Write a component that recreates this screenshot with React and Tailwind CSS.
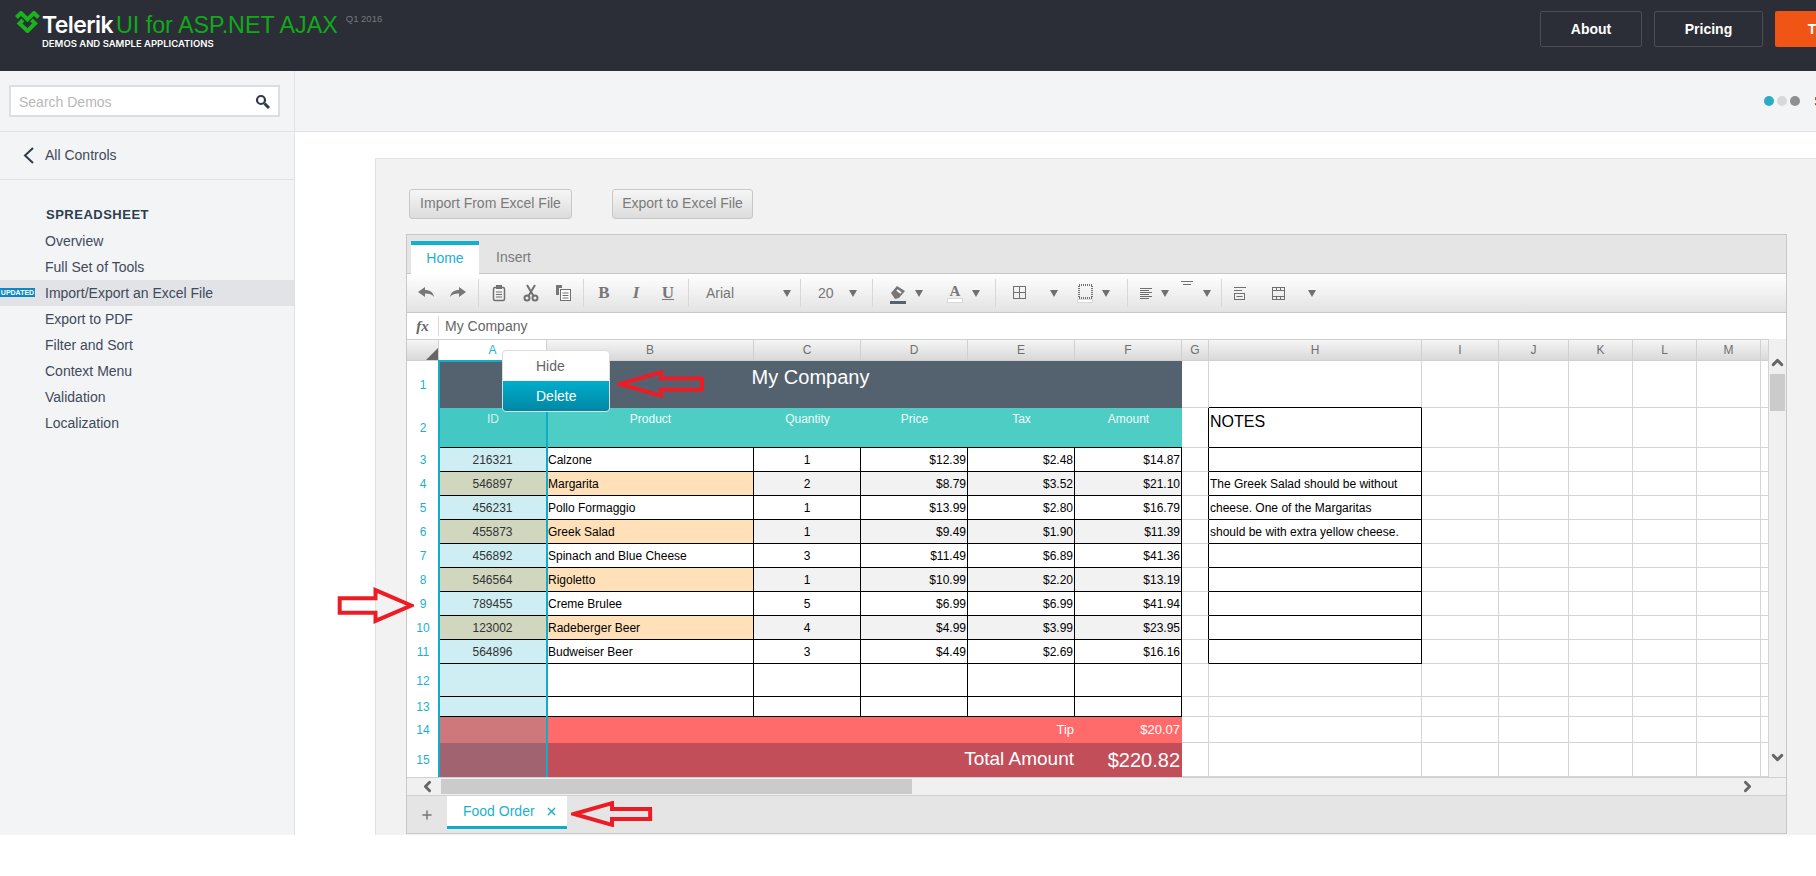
import { ChevronUp, ChevronDown, ChevronLeft, ChevronRight, Plus, X } from "lucide-react";

const SANS = "font-['Liberation_Sans',Arial,sans-serif]";

const navItems = ["Overview", "Full Set of Tools", "Import/Export an Excel File", "Export to PDF", "Filter and Sort", "Context Menu", "Validation", "Localization"];

const columns = ["A", "B", "C", "D", "E", "F", "G", "H", "I", "J", "K", "L", "M", ""];
const GRID_COLS = "grid-cols-[32px_108px_207px_107px_107px_107px_107px_27px_213px_77px_70px_64px_64px_64px_8px]";
const GRID_ROWS = "grid-rows-[47px_40px_24px_24px_24px_24px_24px_24px_24px_24px_24px_33px_20px_26px_34px]";

const orders = [
  ["216321", "Calzone", "1", "$12.39", "$2.48", "$14.87"],
  ["546897", "Margarita", "2", "$8.79", "$3.52", "$21.10"],
  ["456231", "Pollo Formaggio", "1", "$13.99", "$2.80", "$16.79"],
  ["455873", "Greek Salad", "1", "$9.49", "$1.90", "$11.39"],
  ["456892", "Spinach and Blue Cheese", "3", "$11.49", "$6.89", "$41.36"],
  ["546564", "Rigoletto", "1", "$10.99", "$2.20", "$13.19"],
  ["789455", "Creme Brulee", "5", "$6.99", "$6.99", "$41.94"],
  ["123002", "Radeberger Beer", "4", "$4.99", "$3.99", "$23.95"],
  ["564896", "Budweiser Beer", "3", "$4.49", "$2.69", "$16.16"],
];

const notes = {
  4: "The Greek Salad should be without",
  5: "cheese. One of the Margaritas",
  6: "should be with extra yellow cheese.",
};

const GRAY = "border-r border-b border-[#d4d4d4]";
const BLACK = "border-r border-b border-black";

function RowNum({ n }) {
  return <div className="flex items-center justify-center text-[12px] text-[#1cb0cf] bg-white">{n}</div>;
}

// columns G to N of a row, the notes box sits in H
function TailCells({ row }) {
  const inBox = row >= 2 && row <= 11;
  return (
    <>
      <div className={inBox ? "border-r border-b border-r-black border-b-[#d4d4d4] bg-white" : `${GRAY} bg-white`} />
      <div className={`${inBox || row === 1 ? (row === 1 ? "border-r border-r-[#d4d4d4] border-b border-b-black" : BLACK) : GRAY} bg-white flex pl-[1px] whitespace-nowrap text-black ${row === 2 ? "items-start text-[16px] pt-[2px]" : "items-center text-[12px]"}`}>
        {row === 2 ? "NOTES" : notes[row]}
      </div>
      {[0, 1, 2, 3, 4, 5].map((i) => (
        <div key={i} className={`${GRAY} bg-white`} />
      ))}
    </>
  );
}

function OrderRow({ row, data }) {
  const even = row % 2 === 0;
  const rest = even ? "bg-[#f2f2f2]" : "bg-white";
  return (
    <>
      <RowNum n={row} />
      <div className={`${BLACK} ${even ? "bg-[#d1d6be]" : "bg-[#cfeef3]"} flex items-center justify-center text-[12px] text-[#333]`}>{data[0]}</div>
      <div className={`${BLACK} ${even ? "bg-[#ffe0b8]" : "bg-white"} flex items-center pl-[1px] text-[12px] text-black whitespace-nowrap`}>{data[1]}</div>
      <div className={`${BLACK} ${rest} flex items-center justify-center text-[12px] text-black`}>{data[2]}</div>
      {data.slice(3).map((v, i) => (
        <div key={i} className={`${BLACK} ${rest} flex items-center justify-end pr-[1px] text-[12px] text-black`}>{v}</div>
      ))}
      <TailCells row={row} />
    </>
  );
}

function EmptyRow({ row }) {
  return (
    <>
      <RowNum n={row} />
      <div className={`${BLACK} bg-[#cfeef3]`} />
      {[0, 1, 2, 3, 4].map((i) => (
        <div key={i} className={`${BLACK} bg-white`} />
      ))}
      <TailCells row={row} />
    </>
  );
}

function SheetGrid() {
  return (
    <div className={`relative grid h-[416px] ${GRID_COLS} ${GRID_ROWS}`}>
      {/* row 1 */}
      <RowNum n={1} />
      <div className="col-span-6 bg-[#54626f] flex items-start justify-center pt-[1px] text-[20px] text-white">My Company</div>
      <TailCells row={1} />
      {/* row 2 */}
      <RowNum n={2} />
      <div className="bg-[#43c8c3] border-b border-black pt-[2px] text-center text-[12px] text-[#d3f3f1]">ID</div>
      {["Product", "Quantity", "Price", "Tax", "Amount"].map((h) => (
        <div key={h} className="bg-[#4ecdc4] border-b border-black pt-[2px] text-center text-[12px] text-[#eefbfa]">{h}</div>
      ))}
      <TailCells row={2} />
      {orders.map((o, i) => (
        <OrderRow key={i} row={i + 3} data={o} />
      ))}
      <EmptyRow row={12} />
      <EmptyRow row={13} />
      {/* tip */}
      <RowNum n={14} />
      <div className="bg-[#cf787b]" />
      <div className="col-span-4 bg-[#ff6b6b] flex items-center justify-end pr-[1px] pb-[1px] text-[13px] text-white">Tip</div>
      <div className="bg-[#ff6b6b] flex items-center justify-end pr-[2px] pb-[1px] text-[13px] text-white">$20.07</div>
      <TailCells row={14} />
      {/* total */}
      <RowNum n={15} />
      <div className="bg-[#a0636f]" />
      <div className="col-span-4 bg-[#c24e5a] flex items-center justify-end pr-[1px] pb-[2px] text-[19px] text-white">Total Amount</div>
      <div className="bg-[#c24e5a] flex items-center justify-end pr-[2px] text-[20px] text-white">$220.82</div>
      <TailCells row={15} />

      {/* selected column A */}
      <div className="absolute left-[31px] top-[-1px] bottom-0 w-[110px] border-x-2 border-t-2 border-[#12acc9] pointer-events-none" />

      {/* context menu */}
      <div className="absolute left-[95px] top-[-11px] w-[108px] rounded-[4px] border border-[#dcdcdc] bg-white overflow-hidden text-[14px]">
        <div className="h-[30px] flex items-center pl-[33px] text-[#666]">Hide</div>
        <div className="h-[30px] flex items-center pl-[33px] text-white bg-gradient-to-b from-[#00aecb] to-[#0087a5]">Delete</div>
      </div>
    </div>
  );
}

function Sep() {
  return <div className="mx-[4px] h-[28px] w-px flex-none bg-[#d8d8d8]" />;
}

function Caret() {
  return (
    <svg width="8" height="7" viewBox="0 0 8 7" className="flex-none">
      <path d="M0 0h8L4 7z" fill="#6f6f6f" />
    </svg>
  );
}

function Icon({ children, size = 18 }) {
  return (
    <svg width={size} height={size} viewBox={`0 0 ${size} ${size}`} fill="none" stroke="#707070" strokeWidth="1" className="flex-none">
      {children}
    </svg>
  );
}

function Btn({ children }) {
  return <div className="w-[32px] h-full flex items-center justify-center flex-none">{children}</div>;
}

function Toolbar() {
  return (
    <div className="h-[39px] border-b border-[#c8c8c8] bg-gradient-to-b from-white to-[#e3e3e3] flex items-center pl-[3px] text-[#777]">
      <Btn>
        <Icon><path d="M1 8l7-5v3c5 0 8 2 9 7-2-3-5-3.500-9-3.500V13z" fill="#777" stroke="none" /></Icon>
      </Btn>
      <Btn>
        <Icon><path d="M17 8l-7-5v3c-5 0-8 2-9 7 2-3 5-3.500 9-3.500V13z" fill="#777" stroke="none" /></Icon>
      </Btn>
      <Sep />
      <Btn>
        <Icon>
          <rect x="3.500" y="3.500" width="11" height="13" rx="1.500" strokeWidth="1.500" />
          <rect x="6.500" y="1.500" width="5" height="3" fill="#777" />
          <path d="M6 8h6M6 10.500h6M6 13h6" />
        </Icon>
      </Btn>
      <Btn>
        <Icon>
          <circle cx="5" cy="14" r="2.500" strokeWidth="2" />
          <circle cx="13" cy="14" r="2.500" strokeWidth="2" />
          <path d="M6.500 12L13 1M11.500 12L5 1" strokeWidth="2" />
        </Icon>
      </Btn>
      <Btn>
        <Icon>
          <path d="M2 1h6v3H5v7H2z" fill="#777" stroke="none" />
          <rect x="6.500" y="5.500" width="10" height="11" fill="#fff" />
          <path d="M8.500 9h6M8.500 11.500h6M8.500 14h6" />
        </Icon>
      </Btn>
      <Sep />
      <Btn><span className="font-['Liberation_Serif',serif] font-bold text-[17px]">B</span></Btn>
      <Btn><span className="font-['Liberation_Serif',serif] font-bold italic text-[17px]">I</span></Btn>
      <Btn><span className="font-['Liberation_Serif',serif] font-bold underline text-[17px]">U</span></Btn>
      <Sep />
      <div className="w-[103px] h-full flex items-center flex-none pl-[13px] gap-[39px] text-[14px]">
        <span className="w-[38px]">Arial</span>
        <Caret />
      </div>
      <Sep />
      <div className="w-[63px] h-full flex items-center flex-none pl-[13px] gap-[15px] text-[14px]">
        <span className="w-[16px]">20</span>
        <Caret />
      </div>
      <Sep />
      <div className="w-[58px] h-full flex items-center flex-none pl-[13px] gap-[9px]">
        <div className="flex flex-col items-center pt-[2px]">
          <Icon size={16}><path d="M1 8l6-7 8 5-6 7-4 1z" fill="#777" stroke="none" /><path d="M7 5l4 3" stroke="#fff" strokeWidth="2" /></Icon>
          <div className="w-[16px] h-[3px] bg-[#54626f]" />
        </div>
        <Caret />
      </div>
      <div className="w-[56px] h-full flex items-center flex-none pl-[12px] gap-[9px]">
        <div className="flex flex-col items-center">
          <span className="font-['Liberation_Serif',serif] font-bold text-[15px] leading-[14px]">A</span>
          <div className="w-[16px] h-[5px] bg-white border border-[#d8d8d8]" />
        </div>
        <Caret />
      </div>
      <Sep />
      <div className="w-[68px] h-full flex items-center flex-none pl-[11px] gap-[21px]">
        <Icon>
          <rect x="2.500" y="2.500" width="12" height="12" />
          <path d="M8.500 2.500v12M2.500 8.500h12" />
        </Icon>
        <Caret />
      </div>
      <div className="w-[55px] h-full flex items-center flex-none pl-[9px] gap-[9px]">
        <div className="flex flex-col items-center">
          <Icon size={16}><rect x="2" y="2" width="13" height="13" strokeDasharray="1 1" strokeWidth="2" /></Icon>
          <div className="w-[16px] h-[4px] bg-white border border-[#d8d8d8]" />
        </div>
        <Caret />
      </div>
      <Sep />
      <div className="w-[45px] h-full flex items-center flex-none pl-[6px] gap-[7px]">
        <Icon size={16}><path d="M2 3.500h12M2 5.500h9M2 7.500h12M2 9.500h9M2 11.500h12M2 13.500h9" /></Icon>
        <Caret />
      </div>
      <div className="w-[40px] h-full flex items-center flex-none pl-[3px] gap-[9px]">
        <div className="h-[20px] -mt-[8px]">
          <Icon size={14}><path d="M1 2.500h12M3 5.500h8" /></Icon>
        </div>
        <Caret />
      </div>
      <Sep />
      <div className="w-[28px] h-full flex items-center justify-center flex-none">
        <Icon size={16}>
          <path d="M2 2.500h12M2 5.500h8" />
          <rect x="2.500" y="8.500" width="10" height="6" />
          <path d="M4.500 11.500h6" />
        </Icon>
      </div>
      <div className="w-[65px] h-full flex items-center flex-none pl-[16px] gap-[22px]">
        <Icon size={16}>
          <rect x="2.500" y="2.500" width="12" height="12" />
          <path d="M2.500 5.500h12M2.500 11.500h12M6.500 2.500v3M10.500 2.500v3M6.500 11.500v3M10.500 11.500v3" />
        </Icon>
        <Caret />
      </div>
    </div>
  );
}

// red annotation arrow, body outline only
function RedArrow({ className, flip, w, h }) {
  return (
    <svg width={w} height={h} viewBox="0 0 86 36" preserveAspectRatio="none" fill="none" className={`absolute pointer-events-none ${flip ? "-scale-x-100" : ""} ${className}`}>
      <path d="M3 18L43 3v8h40v14H43v8z" stroke="#ed1c24" strokeWidth="4" vectorEffect="non-scaling-stroke" />
    </svg>
  );
}

export default function App() {
  return (
    <div className={`relative w-[1816px] h-[876px] overflow-hidden bg-white ${SANS}`}>
      {/* top bar */}
      <header className="h-[71px] bg-[#2b2e36] flex items-start overflow-hidden">
        <div className="flex-none w-[1540px] pl-[15px] pt-[11px] flex items-start">
          <svg width="25" height="22" viewBox="0 0 25 22" fill="none" stroke="#19b31d" strokeWidth="4" className="flex-none">
            <path d="M1.500 6.500L6 2l6.500 6.500L19 2l4.500 4.500" />
            <path d="M8 9l-3.500 3.500L12.500 20l7.500-7.500L16.500 9" />
          </svg>
          <div className="ml-[2px]">
            <div className="flex items-baseline leading-[26px] pt-[1px]">
              <span className="font-['Inter',sans-serif] font-semibold text-[23px] tracking-[-0.6px] text-white">Telerik</span>
              <span className="ml-[3px] text-[23.300px] text-[#10a91a]">UI for ASP.NET AJAX</span>
              <span className="ml-[8px] self-start text-[9.500px] leading-[14px] text-[#77797e]">Q1 2016</span>
            </div>
            <div className="font-['Inter',sans-serif] font-semibold text-[9.500px] leading-[12px] text-white">DEMOS AND SAMPLE APPLICATIONS</div>
          </div>
        </div>
        <div className="flex flex-none gap-[12px] pt-[11px] text-[14px] font-bold text-white">
          <div className="w-[102px] h-[36px] rounded-[2px] border border-[#4b4d53] flex items-center justify-center">About</div>
          <div className="w-[109px] h-[36px] rounded-[2px] border border-[#4b4d53] flex items-center justify-center">Pricing</div>
          <div className="w-[120px] h-[36px] rounded-[2px] bg-[#f15516] flex items-center justify-center">Try Now</div>
        </div>
      </header>

      <div className="flex h-[764px]">
        {/* sidebar */}
        <aside className="w-[295px] flex-none h-full border-r border-[#e0e1e5] bg-[#f3f4f6] text-[14px] text-[#3f4a5a]">
          <div className="h-[61px] border-b border-[#e0e1e5] pl-[9px] pt-[14px]">
            <div className="w-[271px] h-[32px] border-2 border-[#dcdee2] bg-white flex items-center justify-between pl-[8px] pr-[8px]">
              <span className="pt-[2px] text-[#b8b8b8]">Search Demos</span>
              <svg width="15" height="15" viewBox="0 0 15 15" fill="none" stroke="#2f3a4a" className="flex-none">
                <circle cx="6" cy="6" r="4" strokeWidth="2.200" />
                <path d="M9.500 9.500L14 14" strokeWidth="3" />
              </svg>
            </div>
          </div>
          <div className="h-[48px] border-b border-[#e0e1e5] flex items-center pl-[23px] gap-[11px]">
            <svg width="11" height="17" viewBox="0 0 11 17" fill="none" stroke="#2f3a4a" strokeWidth="2" className="flex-none">
              <path d="M10 1L2 8.500 10 16" />
            </svg>
            <span>All Controls</span>
          </div>
          <div className="pt-[22px]">
            <div className="pl-[46px] h-[26px] flex items-center text-[13px] font-bold tracking-[0.5px] text-[#2c3e50]">SPREADSHEET</div>
            {navItems.map((item, i) => (
              <div key={item} className={`relative h-[26px] flex items-center pl-[45px] ${i === 2 ? "bg-[#e2e3e6]" : ""}`}>
                {i === 2 && (
                  <span className="absolute left-0 top-[8px] w-[35px] h-[9px] bg-[#0f87c6] text-white text-[7px] leading-[9px] text-center font-bold">UPDATED</span>
                )}
                {item}
              </div>
            ))}
          </div>
        </aside>

        <main className="flex-1 min-w-0 flex flex-col">
          <div className="h-[61px] flex-none border-b border-[#e0e1e5] bg-[#f3f4f6] flex items-center justify-end overflow-hidden">
            <div className="flex-none flex items-center gap-[3px] mr-[-26px]">
              <span className="w-[10px] h-[10px] rounded-full bg-[#2bacc6]" />
              <span className="w-[10px] h-[10px] rounded-full bg-[#d8d8d8]" />
              <span className="w-[10px] h-[10px] rounded-full bg-[#8f8f8f]" />
              <span className="ml-[11px] w-[28px] text-[14px] text-[#2f3a4a]">Silk</span>
            </div>
          </div>

          <div className="pt-[26px] pl-[80px]">
            <section className="border-t border-l border-[#e0e1e5] bg-[#f2f2f2] pl-[30px] pr-[29px] pt-[30px] pb-[1px] h-[677px]">
              <div className="flex gap-[40px] ml-[3px] mb-[15px] text-[14px] text-[#7a7a7a]">
                <div className="w-[163px] h-[30px] pb-[1px] rounded-[3px] border border-[#c8c8c8] bg-gradient-to-b from-[#f6f6f6] to-[#dcdcdc] flex items-center justify-center">Import From Excel File</div>
                <div className="w-[141px] h-[30px] pb-[1px] rounded-[3px] border border-[#c8c8c8] bg-gradient-to-b from-[#f6f6f6] to-[#dcdcdc] flex items-center justify-center">Export to Excel File</div>
              </div>

              {/* spreadsheet */}
              <div className="border border-[#c8c8c8] bg-[#e5e5e5]">
                <div className="h-[39px] border-b border-[#c8c8c8] flex items-end pl-[4px] text-[14px]">
                  <div className="w-[68px] h-[33px] pb-[3px] bg-white border-t-4 border-[#12b0ce] flex items-center justify-center text-[#1eb0cf] mb-[-1px]">Home</div>
                  <div className="h-[33px] pl-[17px] pt-[1px] flex items-center text-[#7a7a7a]">Insert</div>
                </div>
                <Toolbar />
                <div className="h-[26px] bg-white flex items-center">
                  <div className="w-[32px] h-[20px] border-r border-[#d8d8d8] flex items-center justify-center font-['Liberation_Serif',serif] italic font-bold text-[15px] text-[#666]">fx</div>
                  <span className="ml-[6px] text-[14px] text-[#666]">My Company</span>
                </div>
                <div className="flex bg-[#f0f0f0]">
                  <div className="w-[1362px] flex-none">
                    <div className={`grid h-[22px] border-y border-[#d0d0d0] text-[12px] text-[#6f6f6f] ${GRID_COLS}`}>
                      <div className="relative bg-gradient-to-b from-[#f5f5f5] to-[#d9d9d9] border-r border-[#d0d0d0] overflow-hidden">
                        <div className="absolute right-0 bottom-0 w-0 h-0 border-l-[12px] border-b-[12px] border-l-transparent border-b-[#666]" />
                      </div>
                      {columns.map((c, i) => (
                        <div key={i} className={`flex items-center justify-center border-r border-[#d0d0d0] ${c === "A" ? "bg-white text-[#1eb0cf]" : "bg-gradient-to-b from-[#f5f5f5] to-[#d9d9d9]"}`}>{c}</div>
                      ))}
                    </div>
                    <SheetGrid />
                  </div>
                  {/* vertical scrollbar */}
                  <div className="flex-1 flex flex-col items-center pt-[15px]">
                    <ChevronUp size={17} strokeWidth={4} className="text-[#666]" />
                    <div className="mt-[3px] w-[15px] h-[37px] bg-[#cbcbcb]" />
                    <div className="flex-1" />
                    <ChevronDown size={17} strokeWidth={4} className="text-[#666] mb-[11px]" />
                  </div>
                </div>
                {/* horizontal scrollbar */}
                <div className="h-[18px] border-t border-[#d0d0d0] bg-[#f0f0f0] flex items-center">
                  <div className="w-[34px] flex justify-end flex-none pr-[5px]">
                    <ChevronLeft size={17} strokeWidth={4} className="text-[#666]" />
                  </div>
                  <div className="w-[471px] h-[15px] bg-[#cbcbcb]" />
                  <div className="flex-1" />
                  <ChevronRight size={17} strokeWidth={4} className="text-[#666] mr-[30px]" />
                </div>
                {/* sheet tabs */}
                <div className="h-[38px] border-t border-[#d0d0d0] flex items-start text-[14px]">
                  <div className="w-[39px] h-full flex items-center justify-center">
                    <Plus size={14} strokeWidth={2.500} className="text-[#777]" />
                  </div>
                  <div className="ml-[1px] w-[120px] h-[33px] bg-white border-b-[3px] border-[#12acc9] flex items-center pl-[16px] gap-[10px] text-[#1eb0cf]">
                    Food Order
                    <X size={13} strokeWidth={2.500} />
                  </div>
                </div>
              </div>
            </section>
          </div>
        </main>
      </div>

      {/* annotations */}
      <RedArrow className="left-[617px] top-[370px]" w={88} h={28} />
      <RedArrow flip className="left-[337px] top-[587px]" w={77} h={37} />
      <RedArrow className="left-[571px] top-[801px]" w={82} h={26} />
    </div>
  );
}
